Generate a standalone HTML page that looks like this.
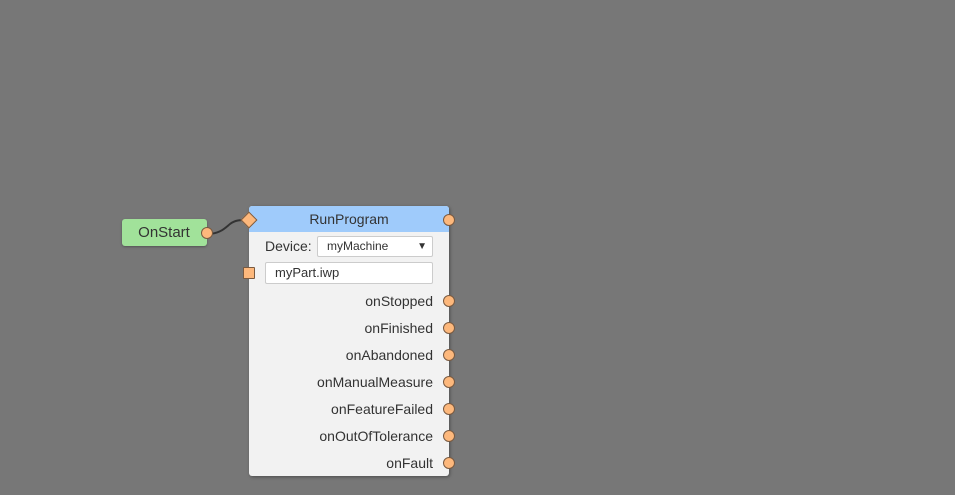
<!DOCTYPE html>
<html><head><style>
body{margin:0;width:955px;height:495px;background:#777777;position:relative;overflow:hidden;font-family:"Liberation Sans",sans-serif;}
.a{position:absolute}
.port{position:absolute;width:10px;height:10px;border-radius:50%;background:#fdb87c;border:1px solid #7a5a40;}
.lbl{position:absolute;right:522px;font-size:14px;color:#333;line-height:16px;}
</style></head><body>
<div class="a" style="left:122px;top:219px;width:85px;height:27px;background:#a1e29a;border-radius:3px;box-shadow:0 1px 2px rgba(0,0,0,.3)"></div>
<div class="a" style="left:122px;top:224px;width:84px;text-align:center;font-size:15px;color:#333">OnStart</div>
<svg class="a" style="left:200px;top:210px" width="60" height="40"><path d="M7 24 C20 24 25 18 30 14 C35 10 40 10 48 10" stroke="#333" stroke-width="2" fill="none"/></svg>
<div class="port" style="left:201px;top:227px"></div>
<div class="a" style="left:249px;top:206px;width:200px;height:270px;background:#f2f2f2;border-radius:3px;box-shadow:1px 1px 3px rgba(0,0,0,.35)"></div>
<div class="a" style="left:249px;top:206px;width:200px;height:26px;background:#9fcbfb;border-radius:3px 3px 0 0"></div>
<div class="a" style="left:249px;top:211px;width:200px;text-align:center;font-size:14px;color:#333">RunProgram</div>
<div class="a" style="left:243px;top:214px;width:10px;height:10px;background:#fdb87c;border:1px solid #7a5a40;transform:rotate(45deg)"></div>
<div class="port" style="left:443px;top:214px"></div>
<div class="a" style="left:265px;top:238px;font-size:14px;color:#333">Device:</div>
<div class="a" style="left:317px;top:236px;width:114px;height:19px;background:#fff;border:1px solid #ccc;border-radius:2px;font-size:12px;color:#333;line-height:19px;text-indent:9px">myMachine<span style="position:absolute;right:5px;font-size:10px">▼</span></div>
<div class="a" style="left:243px;top:267px;width:10px;height:10px;background:#fdb87c;border:1px solid #7a5a40;border-radius:1px"></div>
<div class="a" style="left:265px;top:262px;width:166px;height:20px;background:#fff;border:1px solid #ccc;border-radius:2px;font-size:13px;color:#333;line-height:20px;text-indent:9px">myPart.iwp</div>
<div class="lbl" style="top:293px">onStopped</div><div class="port" style="left:443px;top:295px"></div>
<div class="lbl" style="top:320px">onFinished</div><div class="port" style="left:443px;top:322px"></div>
<div class="lbl" style="top:347px">onAbandoned</div><div class="port" style="left:443px;top:349px"></div>
<div class="lbl" style="top:374px">onManualMeasure</div><div class="port" style="left:443px;top:376px"></div>
<div class="lbl" style="top:401px">onFeatureFailed</div><div class="port" style="left:443px;top:403px"></div>
<div class="lbl" style="top:428px">onOutOfTolerance</div><div class="port" style="left:443px;top:430px"></div>
<div class="lbl" style="top:455px">onFault</div><div class="port" style="left:443px;top:457px"></div>
</body></html>
